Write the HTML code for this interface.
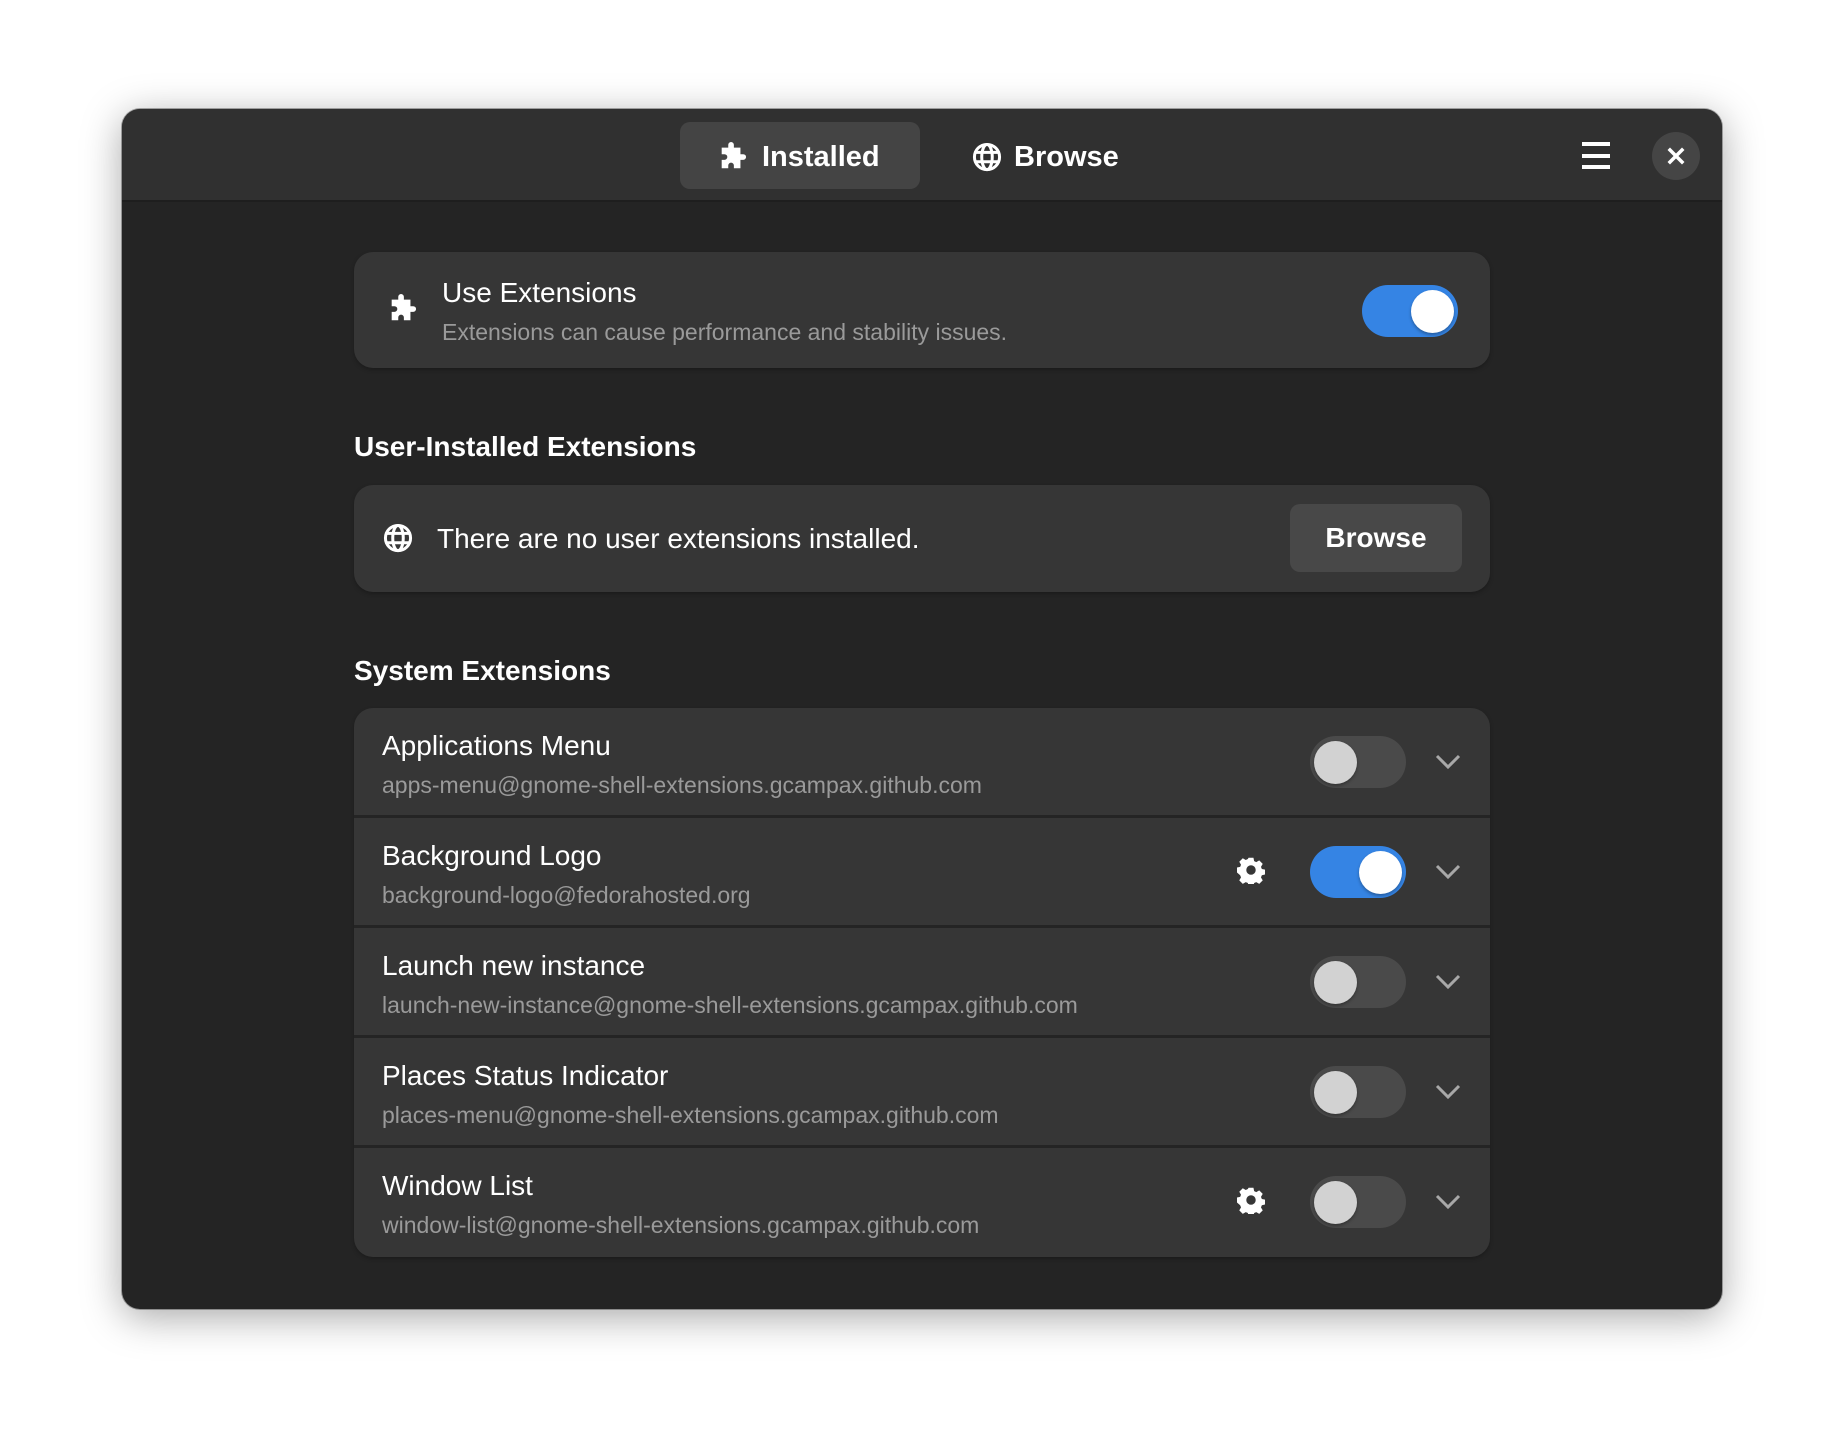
<!DOCTYPE html>
<html><head><meta charset="utf-8"><style>
*{box-sizing:border-box;margin:0;padding:0}
body{width:1844px;height:1444px;background:#fff;font-family:"Liberation Sans",sans-serif;position:relative;overflow:hidden}
.win{position:absolute;left:122px;top:109px;width:1600px;height:1200px;background:#242424;border-radius:18px;overflow:hidden;box-shadow:0 8px 40px rgba(0,0,0,.35),0 0 0 1px rgba(0,0,0,.3)}
.hdr{position:absolute;left:0;top:0;width:1600px;height:93px;background:#303030;border-bottom:2px solid #1e1e1e}
.abs{position:absolute}
.tab{position:absolute;top:13px;height:67px;border-radius:10px;color:#fff;font-weight:bold;font-size:29px;display:flex;align-items:center;padding-top:3px}
.card{position:absolute;left:232px;width:1136px;background:#363636;border-radius:19px;box-shadow:0 2px 4px rgba(0,0,0,.25)}
.t{position:absolute;color:#fff;font-size:28px;white-space:nowrap}
.s{position:absolute;color:#9a9a9a;font-size:23px;white-space:nowrap}
.h{position:absolute;left:232px;color:#fff;font-size:28px;font-weight:bold}
.tog{position:absolute;width:96px;height:52px;border-radius:26px;background:#4a4a4a}
.tog .k{position:absolute;top:4.5px;left:4px;width:43px;height:43px;border-radius:50%;background:#d2d2d2;box-shadow:0 2px 3px rgba(0,0,0,.3)}
.tog.on{background:#3584e4}.tog.on .k{left:49px;background:#fff}
.row{position:absolute;left:0;width:1136px;height:110px;border-bottom:3px solid #242424}
</style></head><body>
<div class="win">
 <div class="hdr">
  <div class="tab" style="left:558px;width:240px;background:#444444;padding-left:37px">
   <svg width="30" height="30" viewBox="0 0 16 16" style="margin-right:15px"><path fill="#fff" d="M6 1.5a1.5 1.5 0 0 1 3 0V3h3.5v3.5H14a1.5 1.5 0 0 1 0 3h-1.5V14H9v-1.5a1.5 1.5 0 0 0-3 0V14H2.5V9.5H4a1.5 1.5 0 0 0 0-3H2.5V3H6z"/></svg>Installed</div>
  <div class="tab" style="left:848px;width:200px">
   <svg width="30" height="30" viewBox="0 0 16 16" style="margin-right:12px;margin-left:2px"><g fill="none" stroke="#fff" stroke-width="1.6"><circle cx="8" cy="8" r="6.7"/><ellipse cx="8" cy="8" rx="2.8" ry="6.7"/><path d="M1.3 5.5h13.4M1.3 10.5h13.4"/></g></svg>Browse</div>
  <div class="abs" style="left:1460px;top:33px;width:28px;height:4px;background:#fff"></div>
  <div class="abs" style="left:1460px;top:45px;width:28px;height:4px;background:#fff"></div>
  <div class="abs" style="left:1460px;top:56px;width:28px;height:4px;background:#fff"></div>
  <div class="abs" style="left:1530px;top:23px;width:48px;height:48px;border-radius:50%;background:#454545"></div>
  <svg class="abs" style="left:1544px;top:37px" width="20" height="20" viewBox="0 0 20 20"><path d="M4 4L16 16M16 4L4 16" stroke="#fff" stroke-width="3.5" stroke-linecap="square"/></svg>
 </div>

 <div class="card" style="top:143px;height:116px">
  <svg class="abs" style="left:33px;top:42px" width="30" height="30" viewBox="0 0 16 16"><path fill="#fff" d="M6 1.5a1.5 1.5 0 0 1 3 0V3h3.5v3.5H14a1.5 1.5 0 0 1 0 3h-1.5V14H9v-1.5a1.5 1.5 0 0 0-3 0V14H2.5V9.5H4a1.5 1.5 0 0 0 0-3H2.5V3H6z"/></svg>
  <div class="t" style="left:88px;top:25px">Use Extensions</div>
  <div class="s" style="left:88px;top:67px">Extensions can cause performance and stability issues.</div>
  <div class="tog on" style="left:1008px;top:33px"><div class="k"></div></div>
 </div>

 <div class="h" style="top:322px">User-Installed Extensions</div>
 <div class="card" style="top:376px;height:107px">
  <svg class="abs" style="left:29px;top:38px" width="30" height="30" viewBox="0 0 16 16"><g fill="none" stroke="#fff" stroke-width="1.6"><circle cx="8" cy="8" r="6.7"/><ellipse cx="8" cy="8" rx="2.8" ry="6.7"/><path d="M1.3 5.5h13.4M1.3 10.5h13.4"/></g></svg>
  <div class="t" style="left:83px;top:38px">There are no user extensions installed.</div>
  <div class="abs" style="left:936px;top:19px;width:172px;height:68px;background:#484848;border-radius:10px;color:#fff;font-weight:bold;font-size:28px;display:flex;align-items:center;justify-content:center">Browse</div>
 </div>

 <div class="h" style="top:546px">System Extensions</div>
 <div class="card" style="top:599px;height:549px;overflow:hidden">
  <div class="row" style="top:0"><div class="t" style="left:28px;top:22px">Applications Menu</div><div class="s" style="left:28px;top:64px">apps-menu@gnome-shell-extensions.gcampax.github.com</div></div>
  <div class="row" style="top:110px"><div class="t" style="left:28px;top:22px">Background Logo</div><div class="s" style="left:28px;top:64px">background-logo@fedorahosted.org</div></div>
  <div class="row" style="top:220px"><div class="t" style="left:28px;top:22px">Launch new instance</div><div class="s" style="left:28px;top:64px">launch-new-instance@gnome-shell-extensions.gcampax.github.com</div></div>
  <div class="row" style="top:330px"><div class="t" style="left:28px;top:22px">Places Status Indicator</div><div class="s" style="left:28px;top:64px">places-menu@gnome-shell-extensions.gcampax.github.com</div></div>
  <div class="row" style="top:440px;border-bottom:none"><div class="t" style="left:28px;top:22px">Window List</div><div class="s" style="left:28px;top:64px">window-list@gnome-shell-extensions.gcampax.github.com</div></div>

  <div class="tog" style="left:956px;top:28px"><div class="k"></div></div>
  <div class="tog on" style="left:956px;top:138px"><div class="k"></div></div>
  <div class="tog" style="left:956px;top:248px"><div class="k"></div></div>
  <div class="tog" style="left:956px;top:358px"><div class="k"></div></div>
  <div class="tog" style="left:956px;top:468px"><div class="k"></div></div>

  <svg class="abs" style="left:1081px;top:42px" width="26" height="520" viewBox="0 0 26 520"><g fill="none" stroke="#a8a8a8" stroke-width="3"><path d="M2 6l11 11 11-11"/><path d="M2 116l11 11 11-11"/><path d="M2 226l11 11 11-11"/><path d="M2 336l11 11 11-11"/><path d="M2 446l11 11 11-11"/></g></svg>

  <svg class="abs" style="left:883px;top:148px" width="28" height="28" viewBox="0 0 16 16"><path fill="#fff" fill-rule="evenodd" d="M6.6 1h2.8l.4 1.9 1.2.6 1.7-1 2 2-1 1.7.5 1.2 1.8.4v2.8l-1.8.4-.5 1.2 1 1.7-2 2-1.7-1-1.2.5-.4 1.9H6.6l-.4-1.9-1.2-.5-1.7 1-2-2 1-1.7-.5-1.2L0 9.4V6.6l1.8-.4.5-1.2-1-1.7 2-2 1.7 1 1.2-.6zM8 5.3a2.7 2.7 0 1 0 0 5.4 2.7 2.7 0 0 0 0-5.4z"/></svg>
  <svg class="abs" style="left:883px;top:478px" width="28" height="28" viewBox="0 0 16 16"><path fill="#fff" fill-rule="evenodd" d="M6.6 1h2.8l.4 1.9 1.2.6 1.7-1 2 2-1 1.7.5 1.2 1.8.4v2.8l-1.8.4-.5 1.2 1 1.7-2 2-1.7-1-1.2.5-.4 1.9H6.6l-.4-1.9-1.2-.5-1.7 1-2-2 1-1.7-.5-1.2L0 9.4V6.6l1.8-.4.5-1.2-1-1.7 2-2 1.7 1 1.2-.6zM8 5.3a2.7 2.7 0 1 0 0 5.4 2.7 2.7 0 0 0 0-5.4z"/></svg>
 </div>
</div>
</body></html>
